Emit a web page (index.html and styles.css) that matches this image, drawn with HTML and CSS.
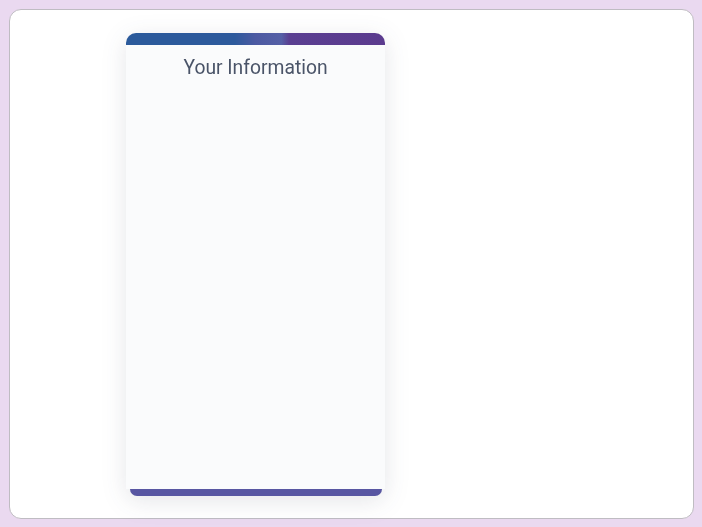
FILE: index.html
```html
<!DOCTYPE html>
<html>
<head>
<meta charset="utf-8">
<link rel="stylesheet" href="styles.css">
</head>
<body>
<div class="panel">
  <div class="card">
    <div class="card-top"></div>
    <div class="card-body">
      <h2 class="card-title">Your Information</h2>
    </div>
    <div class="card-bottom"></div>
  </div>
</div>
</body>
</html>
```
FILE: styles.css
```css
html, body {
  margin: 0;
  padding: 0;
}
body {
  background: #ead9f0;
  width: 702px;
  height: 527px;
  overflow: hidden;
  font-family: Roboto, "Liberation Sans", sans-serif;
}
.panel {
  box-sizing: border-box;
  margin: 9px 0 0 9px;
  width: 685px;
  height: 510px;
  background: #ffffff;
  border: 1px solid #bfbcc2;
  border-radius: 12px;
  padding: 23px 0 0 116px;
}
.card {
  width: 259px;
  display: flex;
  flex-direction: column;
  filter: drop-shadow(0 5px 12px rgba(40, 50, 70, 0.12));
}
.card-top {
  height: 12px;
  border-radius: 10px 10px 0 0;
  background: linear-gradient(90deg, #2b5a9b 0%, #2d5a9c 42%, #4c5aa2 50%, #5560a6 60%, #5a3f91 63%, #5b3b8e 100%);
}
.card-body {
  height: 444px;
  background: #fafbfc;
  display: flex;
  flex-direction: column;
  align-items: center;
}
.card-title {
  margin: 11px 0 0;
  font-size: 19.3px;
  font-weight: 400;
  color: #4a5468;
  line-height: 24px;
}
.card-bottom {
  height: 7px;
  margin: 0 3px 0 4px;
  border-radius: 0 0 7px 7px;
  background: #5856a2;
}
```
